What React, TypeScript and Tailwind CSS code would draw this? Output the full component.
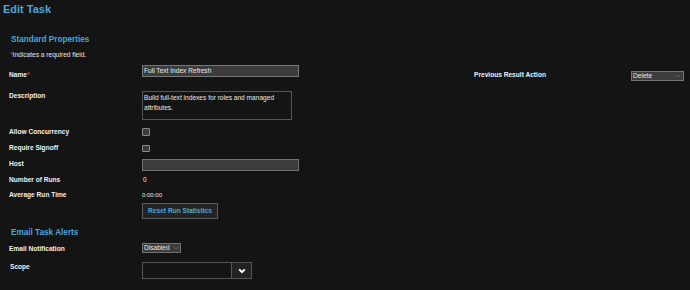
import React from "react";

type P = { children?: React.ReactNode; className?: string };

const Label = ({ children, className = "" }: P) => (
  <div className={`w-[133px] shrink-0 text-[6.6px] leading-[8px] font-bold text-[#f0f0f0] ${className}`}>
    {children}
  </div>
);

const Row = ({ children, className = "" }: P) => (
  <div className={`flex items-start shrink-0 ${className}`}>{children}</div>
);

const Req = () => <span className="text-[#e0342c]">*</span>;

const FaintChevron = () => (
  <svg width="6" height="4" viewBox="0 0 6 4" className="shrink-0">
    <path d="M0.5 0.8 L3 3.2 L5.5 0.8" fill="none" stroke="#6a6a6a" strokeWidth="0.8" />
  </svg>
);

export default function App() {
  return (
    <div className="w-[690px] h-[290px] overflow-hidden bg-[#141414] font-['Liberation_Sans',Arial,sans-serif] flex flex-col">
      {/* Title */}
      <Row className="h-[35px] pt-[2px] pl-[3px]">
        <div className="text-[11px] leading-[14px] font-bold text-[#45a8dd]">Edit Task</div>
      </Row>

      <div className="flex flex-col pl-[9px]">
        {/* Standard Properties */}
        <Row className="h-[16px] pl-[2px]">
          <div className="text-[8.2px] leading-[10px] font-bold text-[#45a8dd]">Standard Properties</div>
        </Row>
        <Row className="h-[14px] pl-[1px]">
          <div className="text-[6.6px] leading-[8px] text-[#e6e6e6]">
            <Req />Indicates a required field.
          </div>
        </Row>

        {/* Name */}
        <Row className="h-[26px]">
          <Label className="mt-[6px]">
            Name<Req />
          </Label>
          <div className="w-[157px] h-[12px] bg-[#3c3c3c] border border-[#777] text-[6.6px] leading-[10px] text-[#e8e8e8] pl-[1px]">
            Full Text Index Refresh
          </div>
          <div className="ml-[175px] w-[157px] mt-[6px] text-[6.6px] leading-[8px] font-bold text-[#f0f0f0]">
            Previous Result Action
          </div>
          <div className="mt-[6px] w-[53px] h-[10px] bg-[#3c3c3c] border border-[#777] flex items-center justify-between pl-[1px] pr-[2px]">
            <span className="text-[6.6px] leading-[8px] text-[#e8e8e8]">Delete</span>
            <FaintChevron />
          </div>
        </Row>

        {/* Description */}
        <Row className="h-[37px]">
          <Label className="mt-[1px]">Description</Label>
          <div className="w-[150px] h-[29px] border border-[#555] bg-[#141414] text-[6.6px] leading-[9.5px] text-[#e8e8e8] px-[1px] pt-[1px]">
            Build full-text indexes for roles and managed attributes.
          </div>
        </Row>

        {/* Allow Concurrency */}
        <Row className="h-[16px]">
          <Label>Allow Concurrency</Label>
          <div className="w-[7.5px] h-[7.5px] bg-[#3a3a3a] border border-[#8a8a8a] rounded-[1px]" />
        </Row>

        {/* Require Signoff */}
        <Row className="h-[14px]">
          <Label>Require Signoff</Label>
          <div className="mt-[0.5px] w-[7.5px] h-[7.5px] bg-[#3a3a3a] border border-[#8a8a8a] rounded-[1px]" />
        </Row>

        {/* Host */}
        <Row className="h-[18px]">
          <Label className="mt-[1.5px]">Host</Label>
          <div className="mt-[0.5px] w-[157px] h-[12.5px] bg-[#3c3c3c] border border-[#6f6f6f]" />
        </Row>

        {/* Number of Runs */}
        <Row className="h-[14.5px]">
          <Label>Number of Runs</Label>
          <div className="text-[6.6px] leading-[8px] text-[#e8e8e8] pl-[1px]">0</div>
        </Row>

        {/* Average Run Time */}
        <Row className="h-[12.5px]">
          <Label>Average Run Time</Label>
          <div className="text-[6px] leading-[8px] text-[#e8e8e8]">0:00:00</div>
        </Row>

        {/* Button */}
        <Row className="h-[25px]">
          <div className="w-[133px] shrink-0" />
          <button className="w-[76px] h-[16px] bg-[#242424] border border-[#5a5a5a] text-[6.6px] leading-[8px] font-bold text-[#45a8dd] flex items-center justify-center">
            Reset Run Statistics
          </button>
        </Row>

        {/* Email Task Alerts */}
        <Row className="h-[15px] pl-[2px]">
          <div className="text-[8.2px] leading-[10px] font-bold text-[#45a8dd]">Email Task Alerts</div>
        </Row>

        {/* Email Notification */}
        <Row className="h-[19px]">
          <Label className="mt-[1.5px]">Email Notification</Label>
          <div className="w-[39px] h-[10px] bg-[#3c3c3c] border border-[#6f6f6f] flex items-center justify-between pl-[1px] pr-[1px]">
            <span className="text-[6.6px] leading-[8px] text-[#e8e8e8]">Disabled</span>
            <FaintChevron />
          </div>
        </Row>

        {/* Scope */}
        <Row className="h-[17px]">
          <Label className="mt-[1px] pl-[1px]">Scope</Label>
          <div className="w-[110px] h-[17px] border border-[#555] bg-[#141414] flex">
            <div className="flex-1" />
            <div className="w-[20px] h-full border-l border-[#555] bg-[#222] flex items-center justify-center">
              <svg width="8" height="6" viewBox="0 0 8 6">
                <path d="M1.2 1.4 L4 4.2 L6.8 1.4" fill="none" stroke="#ffffff" strokeWidth="2" strokeLinejoin="miter" />
              </svg>
            </div>
          </div>
        </Row>
      </div>
    </div>
  );
}
